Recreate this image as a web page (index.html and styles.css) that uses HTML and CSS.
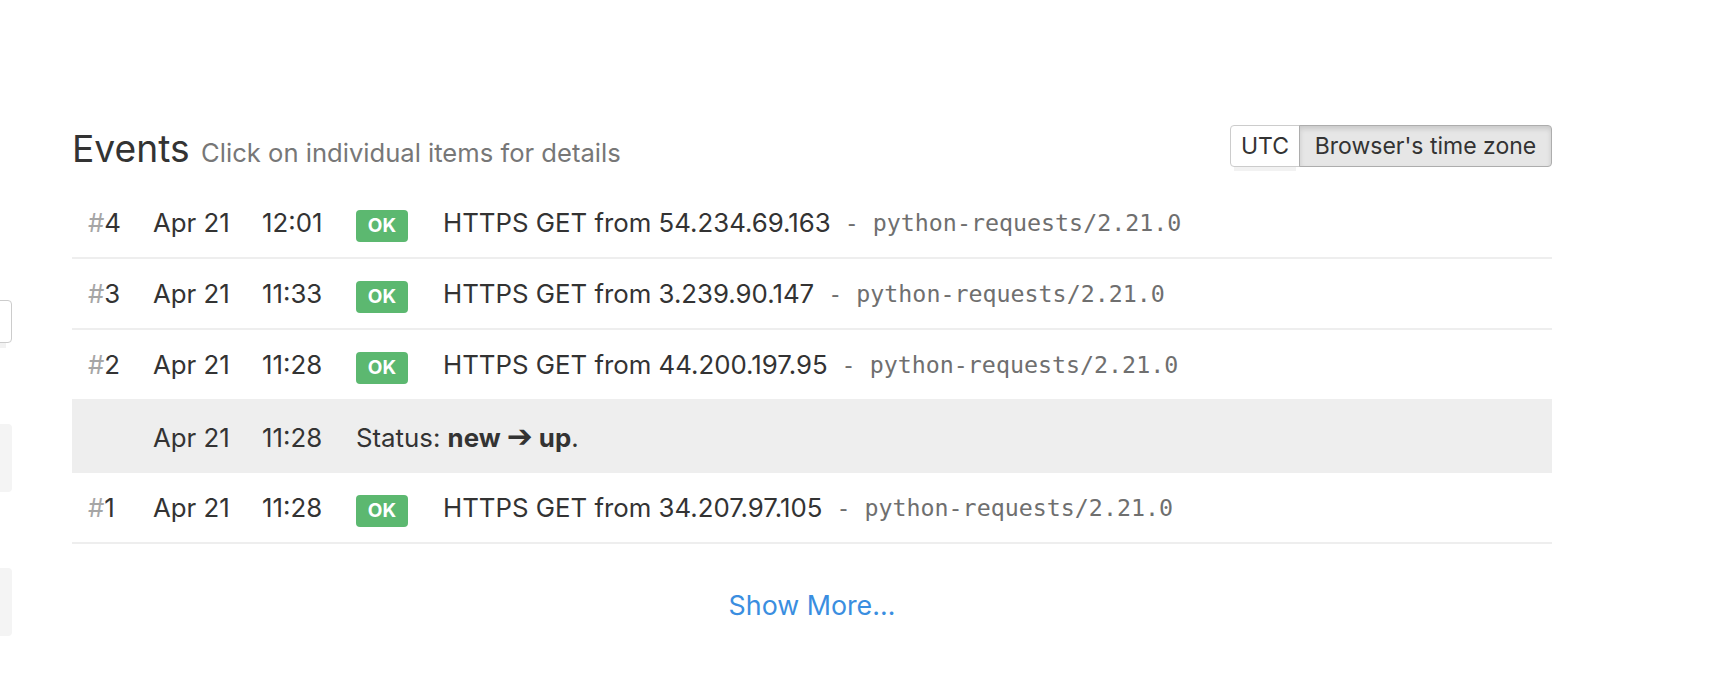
FILE: index.html
```html
<!DOCTYPE html>
<html lang="en">
<head>
<meta charset="utf-8">
<title>Events</title>
<link rel="stylesheet" href="styles.css">
</head>
<body>
<div class="side">
  <div class="side-input"></div>
  <div class="side-input-shadow"></div>
  <div class="side-block first"></div>
  <div class="side-block second"></div>
</div>
<main class="events">
  <div class="events-header">
    <h2 class="title">Events <small>Click on individual items for details</small></h2>
    <div class="tz-switch">
      <button class="tz-btn">UTC</button>
      <button class="tz-btn active">Browser's time zone</button>
      <span class="tz-ghost"></span>
    </div>
  </div>
  <div class="log">
    <div class="log-row">
      <div class="n"><span class="hash">#</span>4</div>
      <div class="date">Apr 21</div>
      <div class="time">12:01</div>
      <div class="event"><span class="badge">OK</span><span class="desc">HTTPS GET from 54.234.69.163</span><span class="ua">- python-requests/2.21.0</span></div>
    </div>
    <div class="log-row">
      <div class="n"><span class="hash">#</span>3</div>
      <div class="date">Apr 21</div>
      <div class="time">11:33</div>
      <div class="event"><span class="badge">OK</span><span class="desc">HTTPS GET from 3.239.90.147</span><span class="ua">- python-requests/2.21.0</span></div>
    </div>
    <div class="log-row">
      <div class="n"><span class="hash">#</span>2</div>
      <div class="date">Apr 21</div>
      <div class="time">11:28</div>
      <div class="event"><span class="badge">OK</span><span class="desc">HTTPS GET from 44.200.197.95</span><span class="ua">- python-requests/2.21.0</span></div>
    </div>
    <div class="log-row status">
      <div class="n"></div>
      <div class="date">Apr 21</div>
      <div class="time">11:28</div>
      <div class="event">Status:&nbsp;<b>new <span class="arrow">➔</span> up</b>.</div>
    </div>
    <div class="log-row">
      <div class="n"><span class="hash">#</span>1</div>
      <div class="date">Apr 21</div>
      <div class="time">11:28</div>
      <div class="event"><span class="badge">OK</span><span class="desc">HTTPS GET from 34.207.97.105</span><span class="ua">- python-requests/2.21.0</span></div>
    </div>
  </div>
  <div class="more"><a href="#" class="more-link">Show More…</a></div>
</main>
</body>
</html>
```
FILE: styles.css
```css
html, body {
  margin: 0;
  padding: 0;
  background: #fff;
}
body {
  font-family: Inter, "Noto Sans", sans-serif;
  color: #333;
  font-size: 25.8px;
  position: relative;
  width: 1720px;
  height: 684px;
  overflow: hidden;
}

/* cut-off left column */
.side {
  position: absolute;
  left: 0;
  top: 0;
  width: 12px;
}
.side-input {
  position: absolute;
  left: -20px;
  top: 300px;
  width: 30px;
  height: 41px;
  border: 1px solid #ccc;
  border-radius: 4px;
}
.side-input-shadow {
  position: absolute;
  left: 0;
  top: 343px;
  width: 6px;
  height: 5px;
  background: #f2f2f2;
}
.side-block {
  position: absolute;
  left: -20px;
  width: 32px;
  background: #f4f4f4;
  border-radius: 4px;
}
.side-block.first { top: 424px; height: 68px; }
.side-block.second { top: 568px; height: 68px; }

.events {
  margin-left: 72px;
  width: 1480px;
  padding-top: 125px;
}
.events-header {
  display: flex;
  justify-content: space-between;
  align-items: center;
  height: 42px;
  margin-bottom: 21px;
}
.title {
  margin: 0;
  padding-top: 9px;
  font-weight: 400;
  font-size: 37.2px;
  line-height: 42px;
  color: #333;
}
.title small {
  font-size: 25.6px;
  color: #777;
  margin-left: 1px;
}
.tz-switch {
  display: flex;
  position: relative;
}
.tz-btn {
  font-family: Inter, "Noto Sans", sans-serif;
  font-size: 23px;
  color: #333;
  background: #fff;
  border: 1px solid #ccc;
  height: 42px;
  padding: 0 10px;
  margin: 0;
  border-radius: 4px 0 0 4px;
  line-height: 40px;
}
.tz-btn:first-child { width: 70px; }
.tz-btn.active {
  background: #e6e6e6;
  border-color: #adadad;
  border-radius: 0 4px 4px 0;
  margin-left: -1px;
  width: 253px;
  box-shadow: inset 0 3px 5px rgba(0, 0, 0, 0.125);
}
.tz-ghost {
  position: absolute;
  left: 4px;
  top: 42px;
  width: 62px;
  height: 4px;
  background: #f2f2f2;
}

.log-row {
  display: grid;
  grid-template-columns: 81px 109px 94px 1fr;
  align-items: center;
  height: 69px;
  border-bottom: 2px solid #eee;
  white-space: nowrap;
}
.log-row.status {
  background: #eee;
  height: 72px;
  border-bottom: 0;
}
.n {
  padding-left: 16px;
}
.hash {
  color: #a6a6a6;
}
.event {
  display: flex;
  align-items: center;
}
.badge {
  display: inline-block;
  width: 52px;
  height: 32px;
  line-height: 32px;
  text-align: center;
  background: #5cb870;
  color: #fff;
  font-weight: 700;
  font-size: 19px;
  border-radius: 4px;
  margin-top: 6px;
  margin-right: 35px;
}
.ua {
  font-family: "DejaVu Sans Mono", "Liberation Mono", monospace;
  font-size: 23.3px;
  color: #6f6f6f;
  margin-left: 14px;
}
.arrow {
  font-family: "DejaVu Sans", sans-serif;
  font-size: 31px;
  line-height: 1;
}
.more {
  text-align: center;
  padding-top: 45px;
}
.more-link {
  color: #3a8ee0;
  text-decoration: none;
  font-size: 26.8px;
}
```
